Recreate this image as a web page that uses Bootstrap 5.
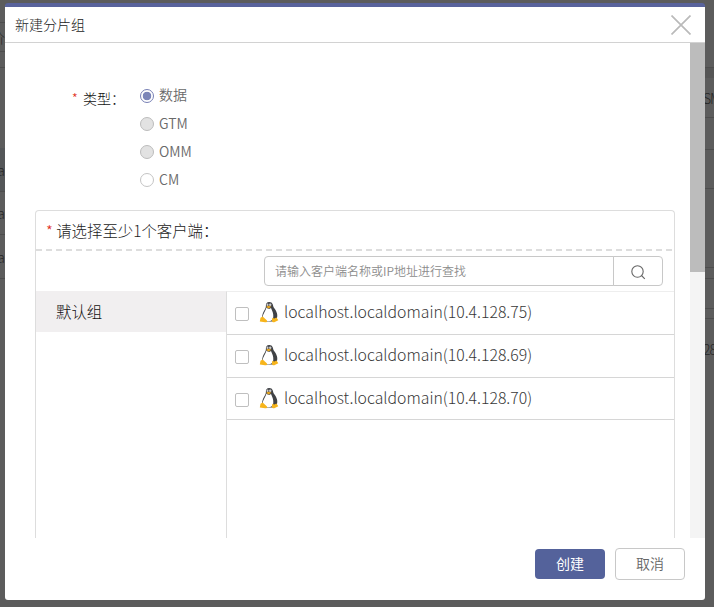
<!DOCTYPE html>
<html lang="zh-CN">
<head>
<meta charset="utf-8">
<meta name="viewport" content="width=device-width, initial-scale=1">
<title>新建分片组</title>
<link href="https://cdn.jsdelivr.net/npm/bootstrap@5.3.0/dist/css/bootstrap.min.css" rel="stylesheet">
<style>
body{height:607px;background:#5c5c5c;font-family:"Noto Sans CJK SC",sans-serif;font-size:14px;font-weight:300;color:#555;line-height:20px}
/* dimmed page behind the dialog */
.strip{height:607px;color:#262626;font-size:14px;white-space:nowrap}
.strip-l{width:5px}.strip-r{width:9px}
.strip>div{border-bottom:1px solid #4d4d4d;overflow:hidden;flex:none;display:flex;align-items:center}
.strip-l>div{justify-content:flex-end}
.strip-r>div{letter-spacing:-1px}
.strip-r span{margin-left:-2px}
.dialog{width:700px;height:597px;margin-top:3px;border-top:4px solid #59639c;border-radius:3px;overflow:hidden}
.dlg-head{height:36px;border-bottom:1px solid #d2d2d2;padding:0 14px 0 10px;color:#222}
.dlg-head span{padding-bottom:1px}
.dlg-body{height:495px}
.content-col{padding:41px 15px 0 30px}
.track{width:15px;background:#f4f4f4}
.thumb{height:229px;background:#bcbcbc}
.star{color:#e02b20}
.type-label{width:105px;padding:4px 15px 0 0;color:#111}
.type-label .star{margin-right:2px}
.opt{height:28px;gap:5px;color:#6a6a6a;font-weight:350}
.opt .form-check-input{width:14px;height:14px;margin:5px 0 0;border:1px solid #c4c4c4;background-image:none;background-color:#fff;opacity:1}
.opt .form-check-input:disabled{background-color:#e2e2e2;border-color:#bcbcbc}
.opt .form-check-input:checked{border-color:#7780b5;background:radial-gradient(circle,#7b85b8 0 4px,#fff 4.6px)}
.opt label{line-height:20px;opacity:1!important}
.opt:not(:first-child) label{padding-top:1px}
.panel-box{margin-top:14px;height:340px;border:1px solid #ddd;border-bottom:0;border-radius:4px 4px 0 0}
.panel-title{height:40px;padding:0 11px 2px 10px;font-size:15.400px;color:#222}
.dash{height:2px;margin-top:-2px;background:repeating-linear-gradient(90deg,#ddd 0 6px,transparent 6px 10px)}
.find{height:40px;padding:5px 11px 0 0}
.find .input-group{width:399px;height:30px}
.find .form-control{font-size:12px;font-weight:350;height:30px;padding:0 11px 2px 10px;border-color:#c8c8c8;border-radius:4px}
.find .form-control::placeholder{color:#8c8c8c}
.find .btn{width:50px;height:30px;padding:1px 0 0;border-color:#c8c8c8;border-radius:4px;line-height:0}
.groups{width:190px}
.group-item{height:41px;background:#f1eff0;padding:0 0 2px 20px;font-size:15.400px;color:#111}
.hosts{border-left:1px solid #ddd;border-top:1px solid #eee;font-size:15.800px;color:#383838}
.host{height:43px;border-bottom:1px solid #d6d6d6;padding-left:8px}
.host:last-child{height:42px}
.host span{padding-bottom:2px}
.host .form-check-input{width:14px;height:14px;margin:2px 10px 0 0;border:1px solid #bfbfbf;border-radius:2px}
.host svg{margin:-2px 5px 0 0}
.dlg-foot{height:62px;gap:10px;padding:10px 20px 0 0}
.dlg-foot .btn{width:70px;height:32px;padding:0 0 1px;font-size:14px;font-weight:350;border-radius:4px}
.dlg-foot .btn-create,.btn-create:hover{height:30px;margin-top:1px;background:#54629b;color:#fff;border:0;font-weight:400}
.btn-drop{border:1px solid #c8c8c8;color:#666}
</style>
<script src="https://cdn.jsdelivr.net/npm/bootstrap@5.3.0/dist/js/bootstrap.bundle.min.js"></script>
</head>
<body class="d-flex overflow-hidden">
<svg class="d-none" xmlns="http://www.w3.org/2000/svg">
  <symbol id="tux" viewBox="0 0 20 22">
    <path d="M10.200 1C7.700 1 6.700 2.700 6.900 5c.1 2.200-1.400 3.700-2.500 6-1.100 2.500-1.500 4.500-1 6.500L6.500 20.500h7.500l3.900-3.200c1.200-3.300-.3-6.800-2-9.300C14.200 6 14.400 5.200 13.800 3.500 13.200 1.800 12 1 10.200 1z" fill="#404246"/>
    <path d="M7.400 6.600c1.600 1.600 3 1.400 4.600.3 1.300 3 2.600 5.600 2.300 9.100-.3 3-2 4.300-5 4.300-3.300 0-5.100-1.500-5.500-4C3.600 13.500 6.500 10.500 7.400 6.600z" fill="#fff"/>
    <ellipse cx="8.500" cy="3.800" rx="1" ry="1.200" fill="#ccc"/><ellipse cx="11.200" cy="3.800" rx="1.200" ry="1.300" fill="#ccc"/>
    <path d="M7.100 5.700 9.500 4.700l2.900 1-2.900 1.800z" fill="#e9a820"/>
    <path d="M1.500 16.800 3.700 15.500l4.300 3.900c.5 1.700-.8 2.100-2 1.900L.8 20.400zM13.300 16.800l2 .8 2.200-1 1.800 2.600-4 2.100c-1.500.3-2.400-.5-2.400-1.500z" fill="#f7b51c"/>
  </symbol>
</svg>

<div class="strip strip-l d-flex flex-column overflow-hidden" aria-hidden="true">
  <div style="height:23px"></div><div style="height:29px">价</div><div style="height:16px"></div>
  <div style="height:124px;background:linear-gradient(#5c5c5c 80px,#545658 80px);padding-top:80px">a</div>
  <div style="height:43px">a</div><div style="height:44px">a</div>
</div>

<main class="dialog bg-white">
  <header class="dlg-head d-flex align-items-center justify-content-between">
    <span>新建分片组</span>
    <svg width="20" height="20" viewBox="0 0 20 20" fill="none" stroke="#bababa" stroke-width="1.700"><path d="M.5.5l19 19M19.500.5l-19 19"/></svg>
  </header>
  <div class="dlg-body d-flex overflow-hidden">
    <div class="content-col flex-grow-1">
      <div class="d-flex">
        <div class="type-label text-end"><span class="star">*</span> 类型：</div>
        <div>
          <div class="opt d-flex"><input class="form-check-input" type="radio" name="kind" id="k1" checked><label for="k1">数据</label></div>
          <div class="opt d-flex"><input class="form-check-input" type="radio" name="kind" id="k2" disabled><label for="k2">GTM</label></div>
          <div class="opt d-flex"><input class="form-check-input" type="radio" name="kind" id="k3" disabled><label for="k3">OMM</label></div>
          <div class="opt d-flex"><input class="form-check-input" type="radio" name="kind" id="k4"><label for="k4">CM</label></div>
        </div>
      </div>
      <section class="panel-box d-flex flex-column">
        <div class="panel-title d-flex align-items-center"><span><span class="star">*</span> 请选择至少1个客户端：</span></div>
        <div class="dash"></div>
        <div class="find d-flex justify-content-end">
          <div class="input-group">
            <input class="form-control" type="text" placeholder="请输入客户端名称或IP地址进行查找">
            <button class="btn" type="button" aria-label="查找"><svg width="16" height="16" viewBox="0 0 16 16" fill="none" stroke="#666" stroke-width="1.100"><circle cx="7.500" cy="7.500" r="5.700"/><path d="M11.500 11.500l3.300 3.300"/></svg></button>
          </div>
        </div>
        <div class="d-flex flex-grow-1">
          <div class="groups"><div class="group-item d-flex align-items-center">默认组</div></div>
          <div class="hosts flex-grow-1">
            <div class="host d-flex align-items-center"><input class="form-check-input" type="checkbox"><svg width="20" height="22"><use href="#tux"/></svg><span>localhost.localdomain(10.4.128.75)</span></div>
            <div class="host d-flex align-items-center"><input class="form-check-input" type="checkbox"><svg width="20" height="22"><use href="#tux"/></svg><span>localhost.localdomain(10.4.128.69)</span></div>
            <div class="host d-flex align-items-center"><input class="form-check-input" type="checkbox"><svg width="20" height="22"><use href="#tux"/></svg><span>localhost.localdomain(10.4.128.70)</span></div>
          </div>
        </div>
      </section>
    </div>
    <div class="track"><div class="thumb"></div></div>
  </div>
  <footer class="dlg-foot d-flex justify-content-end align-items-start">
    <button class="btn btn-create" type="button">创建</button>
    <button class="btn btn-drop" type="button">取消</button>
  </footer>
</main>

<div class="strip strip-r d-flex flex-column overflow-hidden" aria-hidden="true">
  <div style="height:68px"></div><div style="height:50px;background:linear-gradient(#555 10px,#5c5c5c 10px);padding-top:10px"><span>SM</span></div>
  <div style="height:32px"></div><div style="height:39px"></div><div style="height:79px"></div><div style="height:11px"></div><div style="height:30px"></div><div style="height:10px"></div>
  <div style="height:60px;border:0"><span>28</span></div>
</div>
</body>
</html>
